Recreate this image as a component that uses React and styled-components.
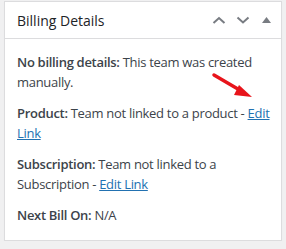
import React from 'react';
import styled, { createGlobalStyle } from 'styled-components';

const GlobalStyle = createGlobalStyle`
  html, body {
    margin: 0;
    padding: 0;
    background: #f0f0f1;
  }
  body {
    padding: 1px 3px 0 4px;
    font-family: "Open Sans", "Noto Sans", sans-serif;
    color: #3c434a;
  }
`;

const Postbox = styled.div`
  position: relative;
  width: 278px;
  height: 240px;
  box-sizing: border-box;
  background: #fff;
  border: 1px solid #dcdcde;
  box-shadow: 0 1px 1px rgba(0, 0, 0, 0.04);
`;

const Header = styled.div`
  display: flex;
  align-items: center;
  height: 36px;
  border-bottom: 1px solid #dcdcde;
  padding: 0 8px 0 12px;
`;

const Title = styled.h2`
  flex: 1;
  margin: 0;
  font-size: 14px;
  font-weight: 400;
  color: #1d2327;
`;

const Handles = styled.div`
  display: flex;
  align-items: center;
  gap: 8px;
`;

const HandleButton = styled.span`
  display: flex;
  align-items: center;
  justify-content: center;
  width: ${p => p.$w || 16}px;
  height: 20px;
  color: #787c82;
`;

const Inside = styled.div`
  padding: 13px 10px 0 12px;
`;

const Line = styled.p`
  margin: 0 0 11px;
  font-size: 13px;
  line-height: 20px;
  letter-spacing: -0.3px;
`;

const Label = styled.strong`
  font-weight: 600;
`;

const EditLink = styled.a`
  color: #2271b1;
  text-decoration: underline;
`;

const Arrow = styled.svg`
  position: absolute;
  left: 206px;
  top: 70px;
`;

function Chevron({ up }) {
  return (
    <svg width="14" height="10" viewBox="0 0 14 10">
      <path
        d={up ? 'M1.5 8 L7 3 L12.5 8' : 'M1.5 2.5 L7 7.5 L12.5 2.5'}
        fill="none"
        stroke="currentColor"
        strokeWidth="2"
      />
    </svg>
  );
}

export default function App() {
  return (
    <>
      <GlobalStyle />
      <Postbox>
        <Header>
          <Title>Billing Details</Title>
          <Handles>
            <HandleButton><Chevron up /></HandleButton>
            <HandleButton><Chevron /></HandleButton>
            <HandleButton $w={14}>
              <svg width="9" height="6" viewBox="0 0 9 6">
                <path d="M0 6 L4.5 0 L9 6 Z" fill="currentColor" />
              </svg>
            </HandleButton>
          </Handles>
        </Header>
        <Inside>
          <Line><Label>No billing details:</Label> This team was created manually.</Line>
          <Line><Label>Product:</Label> Team not linked to a product - <EditLink href="#">Edit Link</EditLink></Line>
          <Line><Label>Subscription:</Label> Team not linked to a Subscription - <EditLink href="#">Edit Link</EditLink></Line>
          <Line><Label>Next Bill On:</Label> N/A</Line>
        </Inside>
        <Arrow width="44" height="30" viewBox="0 0 44 30">
          <line x1="3" y1="3" x2="32" y2="20" stroke="#e8141b" strokeWidth="3.5" strokeLinecap="round" />
          <path d="M28 13 L41 25 L23 23 Z" fill="#e8141b" />
        </Arrow>
      </Postbox>
    </>
  );
}
